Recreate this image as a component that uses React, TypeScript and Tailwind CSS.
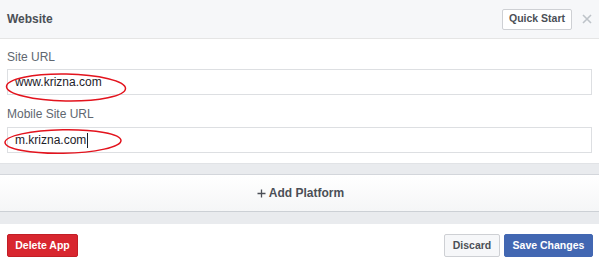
import React from "react";

export default function App() {
  return (
    <div className="w-[599px] h-[264px] bg-white font-['Liberation_Sans',Arial,sans-serif] overflow-hidden">
      {/* Header */}
      <div className="h-[39px] bg-[#f6f7f9] border-b border-[#e5e5e5] flex items-center justify-between pl-[7px] pr-[6px]">
        <span className="text-[12px] font-bold text-[#4b4f56]">Website</span>
        <div className="flex items-center gap-[10px]">
          <button className="h-[21px] w-[70px] border border-[#ced0d4] bg-white rounded-[2px] text-[10.5px] font-bold text-[#4b4f56] flex items-center justify-center">
            Quick Start
          </button>
          <svg width="10" height="10" viewBox="0 0 10 10" className="mr-[1px]">
            <path d="M1 1 L9 9 M9 1 L1 9" stroke="#bec3c9" strokeWidth="1.6" />
          </svg>
        </div>
      </div>

      {/* Body */}
      <div className="relative px-[7px] pt-[10px] pb-[10px]">
        <div className="text-[12px] leading-[16px] text-[#606770] h-[16px]">Site URL</div>
        <div className="mt-[4px] h-[26px] border border-[#dddfe2] flex items-center pl-[7px] text-[12px] text-[#1d2129]">
          www.krizna.com
        </div>
        <div className="mt-[11px] text-[12px] leading-[16px] text-[#606770] h-[16px]">Mobile Site URL</div>
        <div className="mt-[5px] h-[26px] border border-[#dddfe2] flex items-center pl-[7px] text-[12px] text-[#1d2129]">
          m.krizna.com
          <span className="inline-block w-[1px] h-[15px] bg-[#1d2129] ml-[1px]" />
        </div>

        {/* Red annotation ellipses */}
        <svg className="absolute left-[5px] top-[33px]" width="123" height="31" viewBox="0 0 123 31">
          <ellipse cx="61" cy="15.5" rx="59.5" ry="13.5" fill="none" stroke="#e3131d" strokeWidth="1.5" transform="rotate(1 61 15.5)" />
        </svg>
        <svg className="absolute left-[3px] top-[89px]" width="120" height="27" viewBox="0 0 120 27">
          <ellipse cx="60" cy="13.5" rx="58" ry="11.8" fill="none" stroke="#e3131d" strokeWidth="1.5" transform="rotate(-1 60 13.5)" />
        </svg>
      </div>

      {/* Gray band */}
      <div className="h-[12px] bg-[#e9ebee] border-t border-[#e1e3e6] border-b border-b-[#d3d6db]" />

      {/* Add Platform */}
      <div className="h-[37px] bg-gradient-to-b from-white to-[#f5f6f7] border-b border-[#ccd0d5] flex items-center justify-center">
        <div className="flex items-center text-[#4b4f56] ml-[2px]">
          <svg width="9" height="9" viewBox="0 0 9 9" className="mr-[3px]">
            <path d="M4.5 0.5 V8.5 M0.5 4.5 H8.5" stroke="#4b4f56" strokeWidth="1.3" />
          </svg>
          <span className="text-[12px] font-bold">Add Platform</span>
        </div>
      </div>

      {/* Gray band */}
      <div className="h-[12px] bg-[#e9ebee]" />

      {/* Footer */}
      <div className="flex items-center justify-between pl-[7px] pr-[6px] pt-[10px]">
        <button className="h-[23px] w-[71px] bg-[#d8262f] border border-[#c21e26] rounded-[2px] text-[10.5px] font-bold text-white flex items-center justify-center">
          Delete App
        </button>
        <div className="flex items-center gap-[4px]">
          <button className="h-[23px] w-[56px] bg-[#f6f7f9] border border-[#ced0d4] rounded-[2px] text-[10.5px] font-bold text-[#4b4f56] flex items-center justify-center">
            Discard
          </button>
          <button className="h-[23px] w-[89px] bg-[#4267b2] border border-[#4267b2] rounded-[2px] text-[10.5px] font-bold text-white flex items-center justify-center">
            Save Changes
          </button>
        </div>
      </div>
    </div>
  );
}
